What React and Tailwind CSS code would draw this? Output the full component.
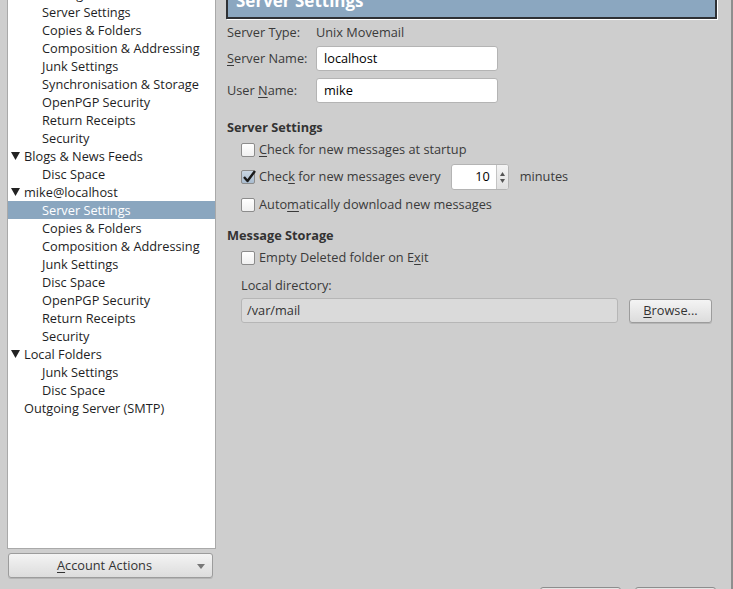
import React from 'react'

const tree = [
  { label: 'Settings', level: 2 },
  { label: 'Server Settings', level: 2 },
  { label: 'Copies & Folders', level: 2 },
  { label: 'Composition & Addressing', level: 2 },
  { label: 'Junk Settings', level: 2 },
  { label: 'Synchronisation & Storage', level: 2 },
  { label: 'OpenPGP Security', level: 2 },
  { label: 'Return Receipts', level: 2 },
  { label: 'Security', level: 2 },
  { label: 'Blogs & News Feeds', level: 1, open: true },
  { label: 'Disc Space', level: 2 },
  { label: 'mike@localhost', level: 1, open: true },
  { label: 'Server Settings', level: 2, selected: true },
  { label: 'Copies & Folders', level: 2 },
  { label: 'Composition & Addressing', level: 2 },
  { label: 'Junk Settings', level: 2 },
  { label: 'Disc Space', level: 2 },
  { label: 'OpenPGP Security', level: 2 },
  { label: 'Return Receipts', level: 2 },
  { label: 'Security', level: 2 },
  { label: 'Local Folders', level: 1, open: true },
  { label: 'Junk Settings', level: 2 },
  { label: 'Disc Space', level: 2 },
  { label: 'Outgoing Server (SMTP)', level: 1 },
]

function TreeRow({ item }) {
  return (
    <div
      className={
        'h-[18px] leading-[18px] flex items-center whitespace-nowrap ' +
        (item.selected ? 'bg-[#8aa6bf] text-white' : 'text-[#1e1e24]')
      }
    >
      <div className="w-[16px] flex justify-end pr-[4px]">
        {item.open && (
          <svg width="9" height="8" viewBox="0 0 9 8">
            <path d="M0 0 H9 L4.5 8 Z" fill="#222" />
          </svg>
        )}
      </div>
      <span className={item.level === 2 ? 'pl-[18px]' : ''}>{item.label}</span>
    </div>
  )
}

function Checkbox({ checked }) {
  return (
    <div
      className={
        'w-[14px] h-[14px] rounded-[2px] border border-[#8c8c8c] relative shrink-0 ' +
        (checked ? 'bg-gradient-to-b from-[#c9d6e3] to-[#a9bccf]' : 'bg-gradient-to-b from-white to-[#f0f0f0]')
      }
    >
      {checked && (
        <svg className="absolute left-[0px] top-[-2px]" width="15" height="15" viewBox="0 0 15 15">
          <path d="M2 8 L5.5 12 L13 2" fill="none" stroke="#1a1a1a" strokeWidth="2.4" strokeLinejoin="round" />
        </svg>
      )}
    </div>
  )
}

function CheckRow({ checked, children, className = '' }) {
  return (
    <div className={'flex items-center gap-[4px] pl-[15px] h-[18px] ' + className}>
      <Checkbox checked={checked} />
      <span className="text-[#3a3a3a] whitespace-nowrap">{children}</span>
    </div>
  )
}

function Button({ children, className = '' }) {
  return (
    <div
      className={
        'h-[24px] rounded-[3px] border border-[#9c9c9c] bg-gradient-to-b from-[#f4f4f4] to-[#dcdcdc] shadow-[0_1px_0_rgba(0,0,0,0.12)] flex items-center justify-center text-[#333] ' +
        className
      }
    >
      {children}
    </div>
  )
}

export default function App() {
  return (
    <div className="w-[733px] h-[589px] overflow-hidden bg-[#cecece] flex font-['Open_Sans',sans-serif] text-[12.75px] border-r-2 border-[#8e8e8e]">
      <div className="w-[216px] shrink-0 pl-[7px] flex flex-col">
        <div className="h-[549px] w-[209px] bg-white border border-t-0 border-[#a9a9a9] overflow-hidden">
          <div className="mt-[-15px]">
            {tree.map((item, i) => (
              <TreeRow key={i} item={item} />
            ))}
          </div>
        </div>
        <Button className="mt-[4px] ml-[1px] w-[205px] h-[25px] relative pr-[12px]">
          <span>
            <u className="underline-offset-2">A</u>ccount Actions
          </span>
          <svg className="absolute right-[7px] top-[10px]" width="8" height="5" viewBox="0 0 8 5">
            <path d="M0 0 H8 L4 5 Z" fill="#777" />
          </svg>
        </Button>
      </div>

      <div className="flex-1 flex flex-col pl-[10px] pr-[15px]">
        <div className="mt-[-14px] h-[33px] w-[491px] bg-[#8ba7c0] border-2 border-[#2e3135] shadow-[1px_1px_0_#fff] flex items-end pl-[8px] pb-[5px]">
          <span className="text-white font-bold text-[17px] leading-[22px]">Server Settings</span>
        </div>

        <div className="mt-[5px] h-[18px] flex items-center text-[#3a3a3a]">
          <span className="w-[90px] pl-[1px]">Server Type:</span>
          <span>Unix Movemail</span>
        </div>
        <div className="mt-[4px] flex items-center text-[#3a3a3a]">
          <span className="w-[90px] pl-[1px]">
            <u className="underline-offset-2">S</u>erver Name:
          </span>
          <div className="w-[182px] h-[25px] bg-white border border-[#b4b4b4] rounded-[3px] pl-[7px] flex items-center text-black">
            localhost
          </div>
        </div>
        <div className="mt-[7px] flex items-center text-[#3a3a3a]">
          <span className="w-[90px] pl-[1px]">
            User <u className="underline-offset-2">N</u>ame:
          </span>
          <div className="w-[182px] h-[25px] bg-white border border-[#b4b4b4] rounded-[3px] pl-[7px] flex items-center text-black">
            mike
          </div>
        </div>

        <div className="mt-[15px] h-[18px] leading-[18px] font-bold text-[#333] pl-[1px]">Server Settings</div>
        <CheckRow className="mt-[5px]">
          <u className="underline-offset-2">C</u>heck for new messages at startup
        </CheckRow>
        <div className="mt-[5px] flex items-center h-[26px]">
          <CheckRow checked>
            Chec<u className="underline-offset-2">k</u> for new messages every
          </CheckRow>
          <div className="ml-[10px] w-[58px] h-[26px] bg-white border border-[#b4b4b4] rounded-[3px] flex overflow-hidden">
            <div className="flex-1 flex items-center justify-end pr-[6px] text-black">10</div>
            <div className="w-[12px] border-l border-[#c4c4c4] bg-gradient-to-b from-[#f4f4f4] to-[#e0e0e0] flex flex-col items-center justify-center gap-[3px]">
              <svg width="5" height="4" viewBox="0 0 5 4">
                <path d="M0 4 H5 L2.5 0 Z" fill="#555" />
              </svg>
              <svg width="5" height="4" viewBox="0 0 5 4">
                <path d="M0 0 H5 L2.5 4 Z" fill="#555" />
              </svg>
            </div>
          </div>
          <span className="ml-[11px] text-[#3a3a3a]">minutes</span>
        </div>
        <CheckRow className="mt-[6px]">
          Auto<u className="underline-offset-2">m</u>atically download new messages
        </CheckRow>

        <div className="mt-[12px] h-[18px] leading-[18px] font-bold text-[#333] pl-[1px]">Message Storage</div>
        <CheckRow className="mt-[5px]">
          Empty Deleted folder on E<u className="underline-offset-2">x</u>it
        </CheckRow>
        <div className="mt-[9px] h-[18px] leading-[18px] pl-[15px] text-[#3a3a3a]">Local directory:</div>
        <div className="mt-[4px] flex items-center pl-[15px]">
          <div className="w-[377px] h-[25px] bg-[#dadada] border border-[#b6b6b6] rounded-[3px] pl-[5px] flex items-center text-[#333]">
            /var/mail
          </div>
          <Button className="ml-[11px] w-[83px]">
            <span>
              <u className="underline-offset-2">B</u>rowse...
            </span>
          </Button>
        </div>

        <div className="mt-auto h-[2px] overflow-hidden flex justify-end gap-[14px] pr-[1px]">
          <div className="w-[81px] h-[25px] border border-[#8d8d8d] rounded-[3px] bg-[#e4e4e4]" />
          <div className="w-[81px] h-[25px] border border-[#8d8d8d] rounded-[3px] bg-[#e4e4e4]" />
        </div>
      </div>
    </div>
  )
}
